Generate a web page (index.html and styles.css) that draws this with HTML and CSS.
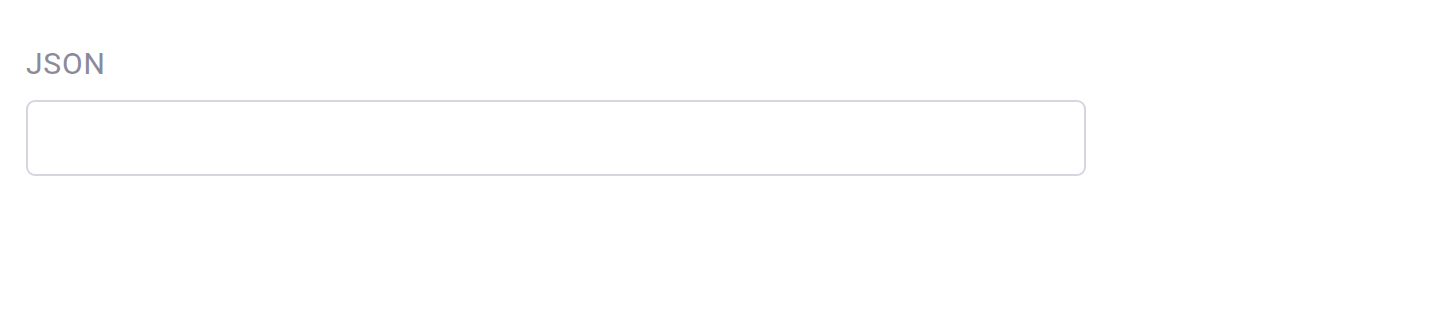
FILE: index.html
```html
<!DOCTYPE html>
<html lang="en">
<head>
  <meta charset="UTF-8">
  <meta name="viewport" content="width=device-width, initial-scale=1.0">
  <title>JSON</title>
  <link rel="stylesheet" href="styles.css">
</head>
<body>
  <div class="field">
    <label for="json">JSON</label>
    <input type="text" id="json">
  </div>
</body>
</html>
```

FILE: styles.css
```css
body {
  font-family: Roboto, 'Noto Sans', sans-serif;
  background-color: #fff;
  margin: 0;
  padding: 48px 26px 0;
}

.field {
  width: 1060px;
}

label {
  display: block;
  font-size: 30px;
  line-height: 32px;
  letter-spacing: 0.8px;
  color: #8a8a99;
  margin-bottom: 20px;
}

input {
  display: block;
  width: 100%;
  height: 76px;
  box-sizing: border-box;
  border: 2px solid #d6d5e2;
  border-radius: 9px;
  padding: 0 20px;
  font-family: inherit;
  font-size: 26px;
  outline: none;
}
```
